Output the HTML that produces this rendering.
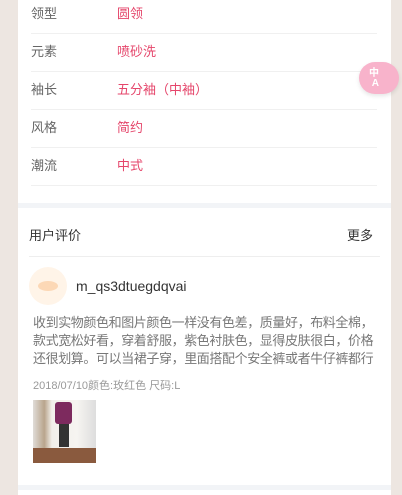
<!DOCTYPE html>
<html><head><meta charset="utf-8"><style>
*{margin:0;padding:0;box-sizing:border-box}
body{width:402px;height:495px;background:#ede6e1;font-family:"Liberation Sans","Noto Sans CJK SC",sans-serif;position:relative;overflow:hidden}
.panel{position:absolute;left:18px;top:0;width:373px;height:495px;background:#fff}
.row{position:absolute;left:31px;width:346px;height:38px;border-bottom:1px solid #f0f0f0;font-size:13px}
.row .k{position:absolute;left:0;top:7px;color:#666}
.row .v{position:absolute;left:86px;top:7px;color:#e5466b}
.abs{position:absolute}
.rv{white-space:nowrap;letter-spacing:-0.4px}
</style></head><body>
<div class="panel"></div>
<div class="row" style="top:-4px"><span class="k">领型</span><span class="v">圆领</span></div>
<div class="row" style="top:34px"><span class="k">元素</span><span class="v">喷砂洗</span></div>
<div class="row" style="top:72px"><span class="k">袖长</span><span class="v">五分袖（中袖）</span></div>
<div class="row" style="top:110px"><span class="k">风格</span><span class="v">简约</span></div>
<div class="row" style="top:148px"><span class="k">潮流</span><span class="v">中式</span></div>
<div class="abs" style="left:18px;top:203px;width:373px;height:5px;background:#f2f4f7"></div>
<div class="abs" style="left:29px;top:225px;font-size:13px;color:#333">用户评价</div>
<div class="abs" style="left:347px;top:225px;font-size:13px;color:#333">更多</div>
<div class="abs" style="left:29px;top:256px;width:351px;height:1px;background:#eee"></div>
<div class="abs" style="left:29px;top:267px;width:38px;height:38px;border-radius:50%;background:#fff4e8"></div>
<div class="abs" style="left:38px;top:281px;width:20px;height:10px;border-radius:50%;background:#fcd8b6"></div>
<div class="abs" style="left:76px;top:278px;font-size:14px;color:#333">m_qs3dtuegdqvai</div>
<div class="abs rv" style="left:33px;top:314px;font-size:13px;line-height:18px;color:#777">收到实物颜色和图片颜色一样没有色差，质量好，布料全棉，<br>款式宽松好看，穿着舒服，紫色衬肤色，显得皮肤很白，价格<br>还很划算。可以当裙子穿，里面搭配个安全裤或者牛仔裤都行</div>
<div class="abs" style="left:33px;top:377px;font-size:11px;color:#999">2018/07/10颜色:玫红色 尺码:L</div>
<div class="abs" style="left:33px;top:400px;width:63px;height:63px;background:linear-gradient(90deg,#e0dcd8 0,#b9a58c 18%,#f2efea 30%,#f6f4f1 70%,#ddd 100%)"></div>
<div class="abs" style="left:55px;top:402px;width:17px;height:22px;background:#7d2a5e;border-radius:3px"></div>
<div class="abs" style="left:59px;top:424px;width:10px;height:23px;background:#333"></div>
<div class="abs" style="left:33px;top:448px;width:63px;height:15px;background:#8a5a3e"></div>
<div class="abs" style="left:18px;top:485px;width:373px;height:5px;background:#f2f4f7"></div>
<div class="abs" style="left:359px;top:62px;width:40px;height:32px;border-radius:16px;background:#f8b3cb;box-shadow:0 2px 4px rgba(0,0,0,.1);color:#fff;font-size:10px;font-weight:bold;line-height:10px;padding:7px 0 0 10px">中<br>&nbsp;A</div>
</body></html>
